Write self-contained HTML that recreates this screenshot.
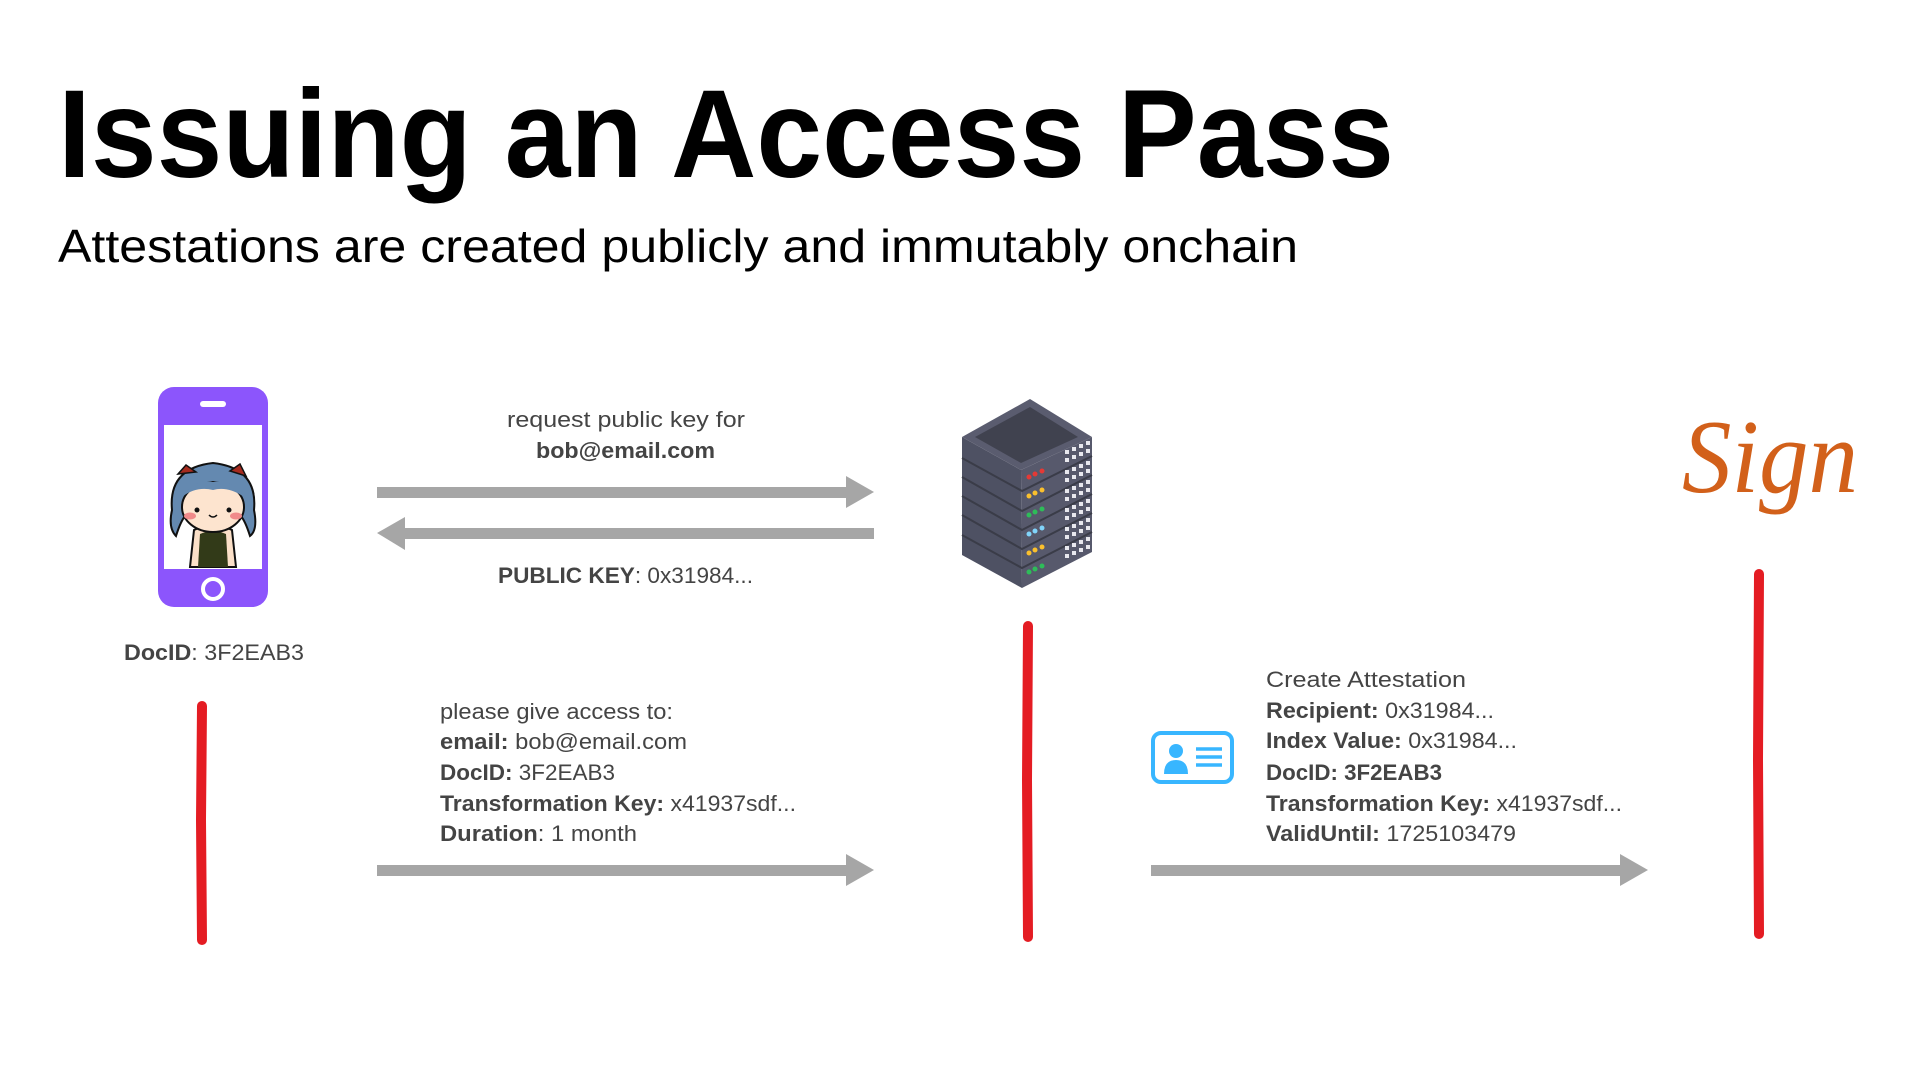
<!DOCTYPE html>
<html><head><meta charset="utf-8"><style>
html,body{margin:0;padding:0;background:#fff;width:1920px;height:1080px;overflow:hidden}
svg{display:block}
text{font-family:"Liberation Sans",sans-serif}
</style></head><body>
<svg width="1920" height="1080" viewBox="0 0 1920 1080" xmlns="http://www.w3.org/2000/svg">
<rect width="1920" height="1080" fill="#fff"/>
<text x="58" y="177" font-size="125" font-weight="bold" fill="#000" textLength="1336" lengthAdjust="spacingAndGlyphs">Issuing an Access Pass</text>
<text x="58" y="262" font-size="46" fill="#000" textLength="1240" lengthAdjust="spacingAndGlyphs">Attestations are created publicly and immutably onchain</text>

<!-- phone -->
<rect x="158" y="387" width="110" height="220" rx="16" fill="#8c55fc"/>
<rect x="164" y="425" width="98" height="144" fill="#fff"/>
<rect x="200" y="401" width="26" height="6" rx="3" fill="#fff"/>
<circle cx="213" cy="589" r="10" fill="none" stroke="#fff" stroke-width="4"/>
<!-- avatar -->
<path d="M190 567 L194 530 Q213 520 232 530 L236 567 Z" fill="#fbe0c8" stroke="#111" stroke-width="2"/>
<path d="M198 567 L200 534 Q213 528 226 534 L228 567 Z" fill="#323a18"/>
<path d="M172 510 Q168 468 213 463 Q258 468 254 510 Q258 530 250 536 Q245 520 240 515 L186 515 Q181 520 176 536 Q168 528 172 510 Z" fill="#6489b0" stroke="#111" stroke-width="2"/>
<path d="M178 474 L186 465 L196 472 Z M230 471 L240 464 L246 476 Z" fill="#a52a1e" stroke="#111" stroke-width="1.5"/>
<ellipse cx="213" cy="507" rx="31" ry="25" fill="#fde4cf" stroke="#111" stroke-width="2"/>
<path d="M182 497 Q196 478 213 482 Q232 478 244 497 Q228 486 213 490 Q196 486 182 497 Z" fill="#6489b0"/>
<circle cx="197" cy="510" r="2.5" fill="#111"/><circle cx="229" cy="510" r="2.5" fill="#111"/>
<ellipse cx="190" cy="516" rx="6" ry="3.5" fill="#f08a8a"/><ellipse cx="236" cy="516" rx="6" ry="3.5" fill="#f08a8a"/>
<path d="M209 515 Q213 519 217 515" fill="none" stroke="#111" stroke-width="1.5"/>

<text x="124" y="660" font-size="22" fill="#444" textLength="180" lengthAdjust="spacingAndGlyphs"><tspan font-weight="bold">DocID</tspan>:  3F2EAB3</text>

<!-- red lines -->
<g stroke="#e41c23" stroke-width="10" stroke-linecap="round" fill="none">
<path d="M202 706 L201 820 L202 940"/>
<path d="M1028 626 L1027 780 L1028 937"/>
<path d="M1759 574 L1758 760 L1759 934"/>
</g>

<!-- arrows -->
<g fill="#a6a6a6">
<rect x="377" y="487" width="470" height="11"/><polygon points="846,476 874,492 846,508"/>
<rect x="405" y="528" width="469" height="11"/><polygon points="405,517 377,533 405,550"/>
<rect x="377" y="865" width="470" height="11"/><polygon points="846,854 874,870 846,886"/>
<rect x="1151" y="865" width="470" height="11"/><polygon points="1620,854 1648,870 1620,886"/>
</g>

<text x="507" y="427" font-size="22" fill="#444" textLength="238" lengthAdjust="spacingAndGlyphs">request public key for</text>
<text x="536" y="458" font-size="22" font-weight="bold" fill="#444" textLength="179" lengthAdjust="spacingAndGlyphs">bob@email.com</text>
<text x="498" y="583" font-size="22" fill="#444" textLength="255" lengthAdjust="spacingAndGlyphs"><tspan font-weight="bold">PUBLIC KEY</tspan>: 0x31984...</text>

<g font-size="22" fill="#444">
<text x="440" y="719" textLength="233" lengthAdjust="spacingAndGlyphs">please give access to:</text>
<text x="440" y="749" textLength="247" lengthAdjust="spacingAndGlyphs"><tspan font-weight="bold">email:</tspan> bob@email.com</text>
<text x="440" y="780" textLength="175" lengthAdjust="spacingAndGlyphs"><tspan font-weight="bold">DocID:</tspan> 3F2EAB3</text>
<text x="440" y="811" textLength="356" lengthAdjust="spacingAndGlyphs"><tspan font-weight="bold">Transformation Key:</tspan> x41937sdf...</text>
<text x="440" y="841" textLength="197" lengthAdjust="spacingAndGlyphs"><tspan font-weight="bold">Duration</tspan>: 1 month</text>

<text x="1266" y="687" textLength="200" lengthAdjust="spacingAndGlyphs">Create Attestation</text>
<text x="1266" y="718" textLength="228" lengthAdjust="spacingAndGlyphs"><tspan font-weight="bold">Recipient:</tspan> 0x31984...</text>
<text x="1266" y="748" textLength="251" lengthAdjust="spacingAndGlyphs"><tspan font-weight="bold">Index Value:</tspan> 0x31984...</text>
<text x="1266" y="780" textLength="176" lengthAdjust="spacingAndGlyphs" font-weight="bold">DocID: 3F2EAB3</text>
<text x="1266" y="811" textLength="356" lengthAdjust="spacingAndGlyphs"><tspan font-weight="bold">Transformation Key:</tspan> x41937sdf...</text>
<text x="1266" y="841" textLength="250" lengthAdjust="spacingAndGlyphs"><tspan font-weight="bold">ValidUntil:</tspan> 1725103479</text>
</g>

<!-- ID icon -->
<rect x="1153" y="733" width="79" height="49" rx="8" fill="none" stroke="#38b6ff" stroke-width="4"/>
<circle cx="1176" cy="751" r="7" fill="#38b6ff"/>
<path d="M1164 774 Q1164 760 1176 760 Q1188 760 1188 774 Z" fill="#38b6ff"/>
<g stroke="#38b6ff" stroke-width="3.5"><path d="M1196 749 H1222 M1196 757 H1222 M1196 765 H1222"/></g>

<!-- server -->
<polygon points="962,437 1021,470 1022,588 962,555" fill="#4e5163"/>
<polygon points="1021,470 1092,437 1092,552 1022,588" fill="#57596c"/>
<polygon points="1030,399 1092,437 1021,470 962,437" fill="#5a5c6f"/>
<polygon points="1030,407 1078,437 1021,463 975,437" fill="#40424f"/>
<path d="M962 458 L1022 491 L1092 456 M962 477 L1022 511 L1092 475 M962 496 L1022 530 L1092 494 M962 515 L1022 549 L1092 513 M962 535 L1022 568 L1092 532" fill="none" stroke="#3a3c48" stroke-width="2"/>
<g>
<circle cx="1029" cy="477" r="2.5" fill="#e53935"/><circle cx="1035" cy="474" r="2.5" fill="#e53935"/><circle cx="1042" cy="471" r="2.5" fill="#e53935"/>
<circle cx="1029" cy="496" r="2.5" fill="#fbc02d"/><circle cx="1035" cy="493" r="2.5" fill="#fbc02d"/><circle cx="1042" cy="490" r="2.5" fill="#fbc02d"/>
<circle cx="1029" cy="515" r="2.5" fill="#2ebd59"/><circle cx="1035" cy="512" r="2.5" fill="#2ebd59"/><circle cx="1042" cy="509" r="2.5" fill="#2ebd59"/>
<circle cx="1029" cy="534" r="2.5" fill="#81d4fa"/><circle cx="1035" cy="531" r="2.5" fill="#81d4fa"/><circle cx="1042" cy="528" r="2.5" fill="#81d4fa"/>
<circle cx="1029" cy="553" r="2.5" fill="#fbc02d"/><circle cx="1035" cy="550" r="2.5" fill="#fbc02d"/><circle cx="1042" cy="547" r="2.5" fill="#fbc02d"/>
<circle cx="1029" cy="572" r="2.5" fill="#2ebd59"/><circle cx="1035" cy="569" r="2.5" fill="#2ebd59"/><circle cx="1042" cy="566" r="2.5" fill="#2ebd59"/>
</g>
<g fill="#e8e8ee" stroke="none">
<path d="M1065 450h4v4h-4zM1072 447h4v4h-4zM1079 444h4v4h-4zM1086 441h4v4h-4z"/>
<path d="M1065 458h4v4h-4zM1072 455h4v4h-4zM1079 452h4v4h-4zM1086 449h4v4h-4z"/>
<path d="M1065 470h4v4h-4zM1072 467h4v4h-4zM1079 464h4v4h-4zM1086 461h4v4h-4z"/>
<path d="M1065 478h4v4h-4zM1072 475h4v4h-4zM1079 472h4v4h-4zM1086 469h4v4h-4z"/>
<path d="M1065 489h4v4h-4zM1072 486h4v4h-4zM1079 483h4v4h-4zM1086 480h4v4h-4z"/>
<path d="M1065 497h4v4h-4zM1072 494h4v4h-4zM1079 491h4v4h-4zM1086 488h4v4h-4z"/>
<path d="M1065 508h4v4h-4zM1072 505h4v4h-4zM1079 502h4v4h-4zM1086 499h4v4h-4z"/>
<path d="M1065 516h4v4h-4zM1072 513h4v4h-4zM1079 510h4v4h-4zM1086 507h4v4h-4z"/>
<path d="M1065 527h4v4h-4zM1072 524h4v4h-4zM1079 521h4v4h-4zM1086 518h4v4h-4z"/>
<path d="M1065 535h4v4h-4zM1072 532h4v4h-4zM1079 529h4v4h-4zM1086 526h4v4h-4z"/>
<path d="M1065 546h4v4h-4zM1072 543h4v4h-4zM1079 540h4v4h-4zM1086 537h4v4h-4z"/>
<path d="M1065 554h4v4h-4zM1072 551h4v4h-4zM1079 548h4v4h-4zM1086 545h4v4h-4z"/>
</g>

<!-- Sign logo -->
<text x="1682" y="492" style="font-family:'Liberation Serif',serif;font-style:italic" font-size="105" fill="#d2601a" textLength="176" lengthAdjust="spacingAndGlyphs">Sign</text>
</svg>
</body></html>
